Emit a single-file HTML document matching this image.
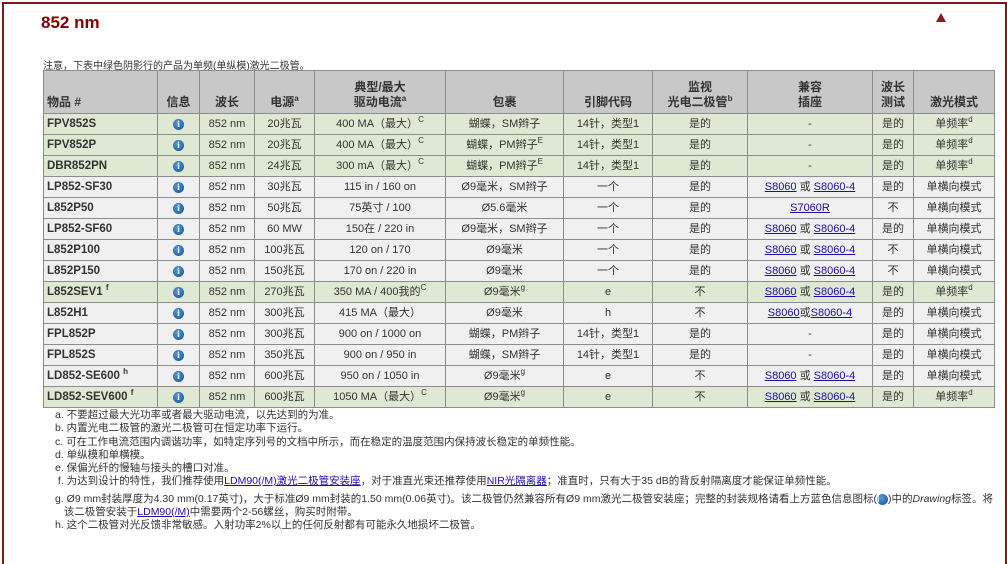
<!DOCTYPE html>
<html><head><meta charset="utf-8"><style>
body{margin:0;width:1007px;height:537px;background:#fff;font-family:"Liberation Sans","Noto Sans CJK SC",sans-serif;overflow:hidden;position:relative}
.frame{position:absolute;left:2px;top:2px;width:1001px;height:560px;border:2px solid #7a1a1a;border-bottom:none}
h2{position:absolute;left:41px;top:13px;margin:0;font-size:17px;color:#800000;font-weight:bold}
.tri{position:absolute;left:936px;top:13px;width:0;height:0;border-left:5px solid transparent;border-right:5px solid transparent;border-bottom:9px solid #8b1a1a}
.note{position:absolute;left:43px;top:57px;font-size:10px;color:#333}
table{position:absolute;left:43px;top:70px;border-collapse:collapse;table-layout:fixed;width:951px;font-size:11px;color:#333}
td,th{border:1px solid #8c8c8c;padding:0 3px;text-align:center;white-space:nowrap;overflow:hidden}
td{height:20px;line-height:20px;padding-top:0;padding-bottom:0}
th{background:#c8c8c8;height:39px;font-size:12px;vertical-align:bottom;padding-bottom:3px;line-height:15px}
th:first-child{text-align:left}
td:first-child{text-align:left;font-weight:bold;font-size:11.5px}
tr.g td{background:#dfe8d3}
tr.w td{background:#f0f0f0}
sup{font-size:8px;vertical-align:5px;line-height:0}
.i{display:inline-block;width:11px;height:11px;border-radius:50%;background:radial-gradient(circle at 40% 35%,#5a9ad8,#0d4c96);color:#fff;font-size:9px;font-weight:bold;line-height:11px;font-family:"Liberation Serif",serif;vertical-align:middle}
a{color:#1a0dab;text-decoration:underline}
.fn{position:absolute;left:55px;top:409px;font-size:10.5px;color:#333;line-height:13.3px}
.fn div{white-space:nowrap}
</style></head><body>
<div class="frame"></div>
<h2>852 nm</h2>
<div class="tri"></div>
<div class="note">注意，下表中绿色阴影行的产品为单频(单纵模)激光二极管。</div>
<table>
<colgroup><col style="width:114px"><col style="width:42px"><col style="width:55px"><col style="width:60px"><col style="width:131px"><col style="width:118px"><col style="width:89px"><col style="width:95px"><col style="width:125px"><col style="width:41px"><col style="width:81px"></colgroup>
<tr><th>物品 #</th><th>信息</th><th>波长</th><th>电源<sup>a</sup></th><th>典型/最大<br>驱动电流<sup>a</sup></th><th>包裹</th><th>引脚代码</th><th>监视<br>光电二极管<sup>b</sup></th><th>兼容<br>插座</th><th>波长<br>测试</th><th>激光模式</th></tr>
<tr class="g"><td>FPV852S</td><td><span class="i">i</span></td><td>852 nm</td><td>20兆瓦</td><td>400 MA（最大）<sup>C</sup></td><td>蝴蝶，SM辫子</td><td>14针，类型1</td><td>是的</td><td>-</td><td>是的</td><td>单频率<sup>d</sup></td></tr>
<tr class="g"><td>FPV852P</td><td><span class="i">i</span></td><td>852 nm</td><td>20兆瓦</td><td>400 MA（最大）<sup>C</sup></td><td>蝴蝶，PM辫子<sup>E</sup></td><td>14针，类型1</td><td>是的</td><td>-</td><td>是的</td><td>单频率<sup>d</sup></td></tr>
<tr class="g"><td>DBR852PN</td><td><span class="i">i</span></td><td>852 nm</td><td>24兆瓦</td><td>300 mA（最大）<sup>C</sup></td><td>蝴蝶，PM辫子<sup>E</sup></td><td>14针，类型1</td><td>是的</td><td>-</td><td>是的</td><td>单频率<sup>d</sup></td></tr>
<tr class="w"><td>LP852-SF30</td><td><span class="i">i</span></td><td>852 nm</td><td>30兆瓦</td><td>115 in / 160 on</td><td>Ø9毫米，SM辫子</td><td>一个</td><td>是的</td><td><a>S8060</a> 或 <a>S8060-4</a></td><td>是的</td><td>单横向模式</td></tr>
<tr class="w"><td>L852P50</td><td><span class="i">i</span></td><td>852 nm</td><td>50兆瓦</td><td>75英寸 / 100</td><td>Ø5.6毫米</td><td>一个</td><td>是的</td><td><a>S7060R</a></td><td>不</td><td>单横向模式</td></tr>
<tr class="w"><td>LP852-SF60</td><td><span class="i">i</span></td><td>852 nm</td><td>60 MW</td><td>150在 / 220 in</td><td>Ø9毫米，SM辫子</td><td>一个</td><td>是的</td><td><a>S8060</a> 或 <a>S8060-4</a></td><td>是的</td><td>单横向模式</td></tr>
<tr class="w"><td>L852P100</td><td><span class="i">i</span></td><td>852 nm</td><td>100兆瓦</td><td>120 on / 170</td><td>Ø9毫米</td><td>一个</td><td>是的</td><td><a>S8060</a> 或 <a>S8060-4</a></td><td>不</td><td>单横向模式</td></tr>
<tr class="w"><td>L852P150</td><td><span class="i">i</span></td><td>852 nm</td><td>150兆瓦</td><td>170 on / 220 in</td><td>Ø9毫米</td><td>一个</td><td>是的</td><td><a>S8060</a> 或 <a>S8060-4</a></td><td>不</td><td>单横向模式</td></tr>
<tr class="g"><td>L852SEV1 <sup>f</sup></td><td><span class="i">i</span></td><td>852 nm</td><td>270兆瓦</td><td>350 MA / 400我的<sup>C</sup></td><td>Ø9毫米<sup>g</sup></td><td>e</td><td>不</td><td><a>S8060</a> 或 <a>S8060-4</a></td><td>是的</td><td>单频率<sup>d</sup></td></tr>
<tr class="w"><td>L852H1</td><td><span class="i">i</span></td><td>852 nm</td><td>300兆瓦</td><td>415 MA（最大）</td><td>Ø9毫米</td><td>h</td><td>不</td><td><a>S8060</a>或<a>S8060-4</a></td><td>是的</td><td>单横向模式</td></tr>
<tr class="w"><td>FPL852P</td><td><span class="i">i</span></td><td>852 nm</td><td>300兆瓦</td><td>900 on / 1000 on</td><td>蝴蝶，PM辫子</td><td>14针，类型1</td><td>是的</td><td>-</td><td>是的</td><td>单横向模式</td></tr>
<tr class="w"><td>FPL852S</td><td><span class="i">i</span></td><td>852 nm</td><td>350兆瓦</td><td>900 on / 950 in</td><td>蝴蝶，SM辫子</td><td>14针，类型1</td><td>是的</td><td>-</td><td>是的</td><td>单横向模式</td></tr>
<tr class="w"><td>LD852-SE600 <sup>h</sup></td><td><span class="i">i</span></td><td>852 nm</td><td>600兆瓦</td><td>950 on / 1050 in</td><td>Ø9毫米<sup>g</sup></td><td>e</td><td>不</td><td><a>S8060</a> 或 <a>S8060-4</a></td><td>是的</td><td>单横向模式</td></tr>
<tr class="g"><td>LD852-SEV600 <sup>f</sup></td><td><span class="i">i</span></td><td>852 nm</td><td>600兆瓦</td><td>1050 MA（最大）<sup>C</sup></td><td>Ø9毫米<sup>g</sup></td><td>e</td><td>不</td><td><a>S8060</a> 或 <a>S8060-4</a></td><td>是的</td><td>单频率<sup>d</sup></td></tr>
</table>
<div class="fn">
<div>a. 不要超过最大光功率或者最大驱动电流，以先达到的为准。</div>
<div>b. 内置光电二极管的激光二极管可在恒定功率下运行。</div>
<div>c. 可在工作电流范围内调谐功率，如特定序列号的文档中所示，而在稳定的温度范围内保持波长稳定的单频性能。</div>
<div>d. 单纵模和单横模。</div>
<div>e. 保偏光纤的慢轴与接头的槽口对准。</div>
<div>&nbsp;f. 为达到设计的特性，我们推荐使用<a>LDM90(/M)激光二极管安装座</a>，对于准直光束还推荐使用<a>NIR光隔离器</a>；准直时，只有大于35 dB的背反射隔离度才能保证单频性能。</div>
<div style="margin-top:4px">g. Ø9 mm封装厚度为4.30 mm(0.17英寸)，大于标准Ø9 mm封装的1.50 mm(0.06英寸)。该二极管仍然兼容所有Ø9 mm激光二极管安装座；完整的封装规格请看上方蓝色信息图标(<span class="i">i</span>)中的<i>Drawing</i>标签。将</div>
<div>&nbsp;&nbsp;&nbsp;该二极管安装于<a>LDM90(/M)</a>中需要两个2-56螺丝，购买时附带。</div>
<div>h. 这个二极管对光反馈非常敏感。入射功率2%以上的任何反射都有可能永久地损坏二极管。</div>
</div>
</body></html>
